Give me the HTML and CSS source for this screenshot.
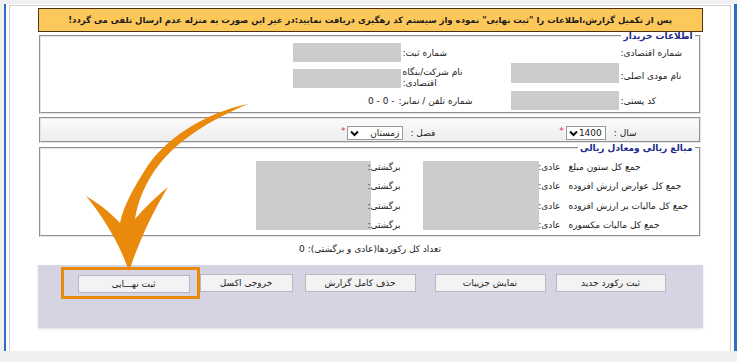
FILE: index.html
```html
<!DOCTYPE html>
<html lang="fa" dir="rtl">
<head>
  <meta charset="UTF-8" />
  <title>ثبت نهایی گزارش</title>
  <link rel="stylesheet" href="styles.css">
</head>
<body>
  <div class="frame">
    <div class="page">
      <div class="content">

        <div class="notice">پس از تکمیل گزارش،اطلاعات را "ثبت نهایی" نموده واز سیستم کد رهگیری دریافت نمایید:در غیر این صورت به منزله عدم ارسال تلقی می گردد!</div>

        <fieldset class="box buyer">
          <legend>اطلاعات خریدار</legend>
          <div class="buyer-grid">
            <span class="lbl c1">شماره اقتصادی:</span>
            <span class="lbl c4">شماره ثبت:</span>
            <span class="field c5"></span>

            <span class="lbl c1">نام مودی اصلی:</span>
            <span class="field c2 top"></span>
            <span class="lbl c4 wrap">نام شرکت/بنگاه اقتصادی:</span>
            <span class="field c5 low"></span>

            <span class="lbl c1">کد پستی:</span>
            <span class="field c2"></span>
            <span class="lbl c4">شماره تلفن / نمابر:</span>
            <span class="value c5" dir="ltr">0 - 0 -</span>
          </div>
        </fieldset>

        <fieldset class="box period">
          <div class="period-row">
            <span class="lbl">سال :</span>
            <span class="select year">1400 <svg width="9" height="7" viewBox="0 0 9 7"><path d="M1 1.5 L4.5 5 L8 1.5" fill="none" stroke="#111" stroke-width="2"/></svg></span>
            <span class="req">*</span>
            <span class="lbl season-lbl">فصل :</span>
            <span class="select season">زمستان <svg width="9" height="7" viewBox="0 0 9 7"><path d="M1 1.5 L4.5 5 L8 1.5" fill="none" stroke="#111" stroke-width="2"/></svg></span>
            <span class="req">*</span>
          </div>
        </fieldset>

        <fieldset class="box amounts">
          <legend>مبالغ ریالی ومعادل ریالی</legend>
          <div class="amount-grid">
            <span class="field normal-box"></span>
            <span class="field return-box"></span>

            <span class="lbl a1">جمع کل ستون مبلغ</span>
            <span class="lbl a2">عادی:</span>
            <span class="lbl a5">برگشتی:</span>

            <span class="lbl a1">جمع کل عوارض ارزش افزوده</span>
            <span class="lbl a2">عادی:</span>
            <span class="lbl a5">برگشتی:</span>

            <span class="lbl a1">جمع کل مالیات بر ارزش افزوده</span>
            <span class="lbl a2">عادی:</span>
            <span class="lbl a5">برگشتی:</span>

            <span class="lbl a1">جمع کل مالیات مکسوره</span>
            <span class="lbl a2">عادی:</span>
            <span class="lbl a5">برگشتی:</span>
          </div>
        </fieldset>

        <div class="count">تعداد کل رکوردها(عادی و برگشتی): 0</div>

        <div class="panel">
          <div class="btn-row">
            <button class="btn b1">ثبت رکورد جدید</button>
            <button class="btn b2">نمایش جزییات</button>
            <button class="btn b3">حذف کامل گزارش</button>
            <button class="btn b4">خروجی اکسل</button>
            <span class="highlight"><button class="btn b5">ثبت نهـــایی</button></span>
          </div>
        </div>

      </div>
    </div>
  </div>

  <svg class="arrow" width="737" height="362" viewBox="0 0 737 362">
    <path d="M248 104 C205 113 165 138 145 170 C131 192 123 208 120 223 C110 212 98 203 86 196 C104 218 119 243 129 271 C139 242 152 213 168 187 C157 196 146 206 135 219 C138 200 146 182 158 166 C178 140 210 120 248 104 Z" fill="#ea8a0c"/>
  </svg>
</body>
</html>
```

FILE: styles.css
```css
body {
  margin: 0;
  background-color: #f0f0f0;
  font-family: "DejaVu Sans", sans-serif;
  font-size: 9px;
  color: #222;
  position: relative;
  height: 362px;
  overflow: hidden;
}
.frame {
  margin: 4px 0 0 2px;
  width: 733px;
  height: 347px;
  box-sizing: border-box;
  border-left: 2px solid #2c6fc6;
  border-right: 3px solid #2c6fc6;
  background-color: white;
  padding: 1px 3px 0 3px;
}
.page {
  height: 346px;
  box-sizing: border-box;
  border: 1px solid #d0d0d0;
  border-bottom: none;
}
.content {
  width: 665px;
  margin: 0 auto;
}
.notice {
  margin-top: 2px;
  height: 24px;
  box-sizing: border-box;
  border: 1px solid #4a3215;
  background-color: #fdc85a;
  color: #1a1a1a;
  font-weight: bold;
  font-size: 8.5px;
  line-height: 22px;
  text-align: center;
  white-space: nowrap;
  overflow: hidden;
}
.box {
  margin: 0 2px 0 1px;
  padding: 0;
  border: 2px groove #e4e4e4;
  min-width: 0;
}
.box legend {
  color: #1c2a8e;
  font-weight: bold;
  font-size: 9px;
  line-height: 8px;
  padding: 0 2px;
  margin-right: 4px;
}
.lbl {
  text-align: left;
  white-space: nowrap;
  padding-left: 2px;
}
.field {
  background-color: #cccccc;
}
.buyer-grid {
  display: grid;
  grid-template-columns: 80px 108px 38px 72px 108px 1fr;
  grid-template-rows: 21px 26px 23px;
  align-items: center;
  padding-top: 2px;
}
.c1 { grid-column: 1; }
.c2 { grid-column: 2; }
.c4 { grid-column: 4; }
.c5 { grid-column: 5; }
.buyer-grid .field {
  height: 19px;
}
.buyer-grid .field.top {
  align-self: start;
  height: 20px;
}
.buyer-grid .field.low {
  margin-top: 5px;
}
.buyer-grid .wrap {
  white-space: normal;
  line-height: 11px;
  padding-top: 4px;
}
.buyer-grid .value {
  text-align: right;
  padding-right: 6px;
}
.period {
  margin-top: 3px;
  height: 26px;
  box-sizing: border-box;
  background: linear-gradient(#fbfbfb, #ededed);
}
.period-row {
  display: flex;
  align-items: center;
  padding: 7px 62px 0 0;
}
.select {
  display: inline-flex;
  align-items: center;
  justify-content: space-between;
  height: 14px;
  box-sizing: border-box;
  border: 1px solid #9a9a9a;
  background-color: white;
  padding: 0 3px 0 2px;
  font-size: 9px;
}
.select.year {
  margin-right: 6px;
  width: 40px;
}
.select.season {
  margin-right: 5px;
  width: 56px;
}
.req {
  color: #e03030;
  font-size: 9px;
  margin-right: 2px;
  align-self: flex-start;
}
.season-lbl {
  margin-right: 124px;
}
.amounts {
  margin-top: 1px;
  height: 93px;
  box-sizing: border-box;
}
.amount-grid {
  display: grid;
  grid-template-columns: 138px 22px 116px 22px 30px 115px 1fr;
  grid-template-rows: repeat(4, 19.5px);
  align-items: center;
  padding-top: 5px;
}
.a1 {
  grid-column: 1;
  padding-left: 8px;
}
.a2 { grid-column: 2; }
.a5 {
  grid-column: 5;
  text-align: right;
  padding-left: 0;
}
.normal-box,
.return-box {
  grid-column: 3;
  grid-row: 1 / span 4;
  align-self: stretch;
  margin: 4px 0 5px;
}
.return-box {
  grid-column: 6;
}
.count {
  margin-top: 6px;
  text-align: center;
  line-height: 12px;
}
.panel {
  margin-top: 10px;
  height: 63px;
  background-color: #d4d4e3;
  box-shadow: 0 1px 2px rgba(0, 0, 0, 0.12);
  padding-top: 2px;
  box-sizing: border-box;
}
.btn-row {
  display: flex;
  align-items: center;
  height: 32px;
  padding-right: 37px;
}
.btn {
  height: 18px;
  box-sizing: border-box;
  border: 1px solid #b8b8c4;
  background-color: #f3f3f3;
  font-family: "DejaVu Sans", sans-serif;
  font-size: 9px;
  color: #222;
  padding: 0;
  margin: 0;
}
.b1 { width: 110px; }
.b2 { width: 111px; margin-right: 10px; }
.b3 { width: 111px; margin-right: 19px; }
.b4 { width: 93px; margin-right: 12px; }
.b5 { width: 112px; }
.highlight {
  display: flex;
  height: 32px;
  box-sizing: border-box;
  border: 3px solid #ea8a0c;
  padding: 5px 7px 3px 14px;
}
.arrow {
  position: absolute;
  left: 0;
  top: 0;
  pointer-events: none;
}
```
